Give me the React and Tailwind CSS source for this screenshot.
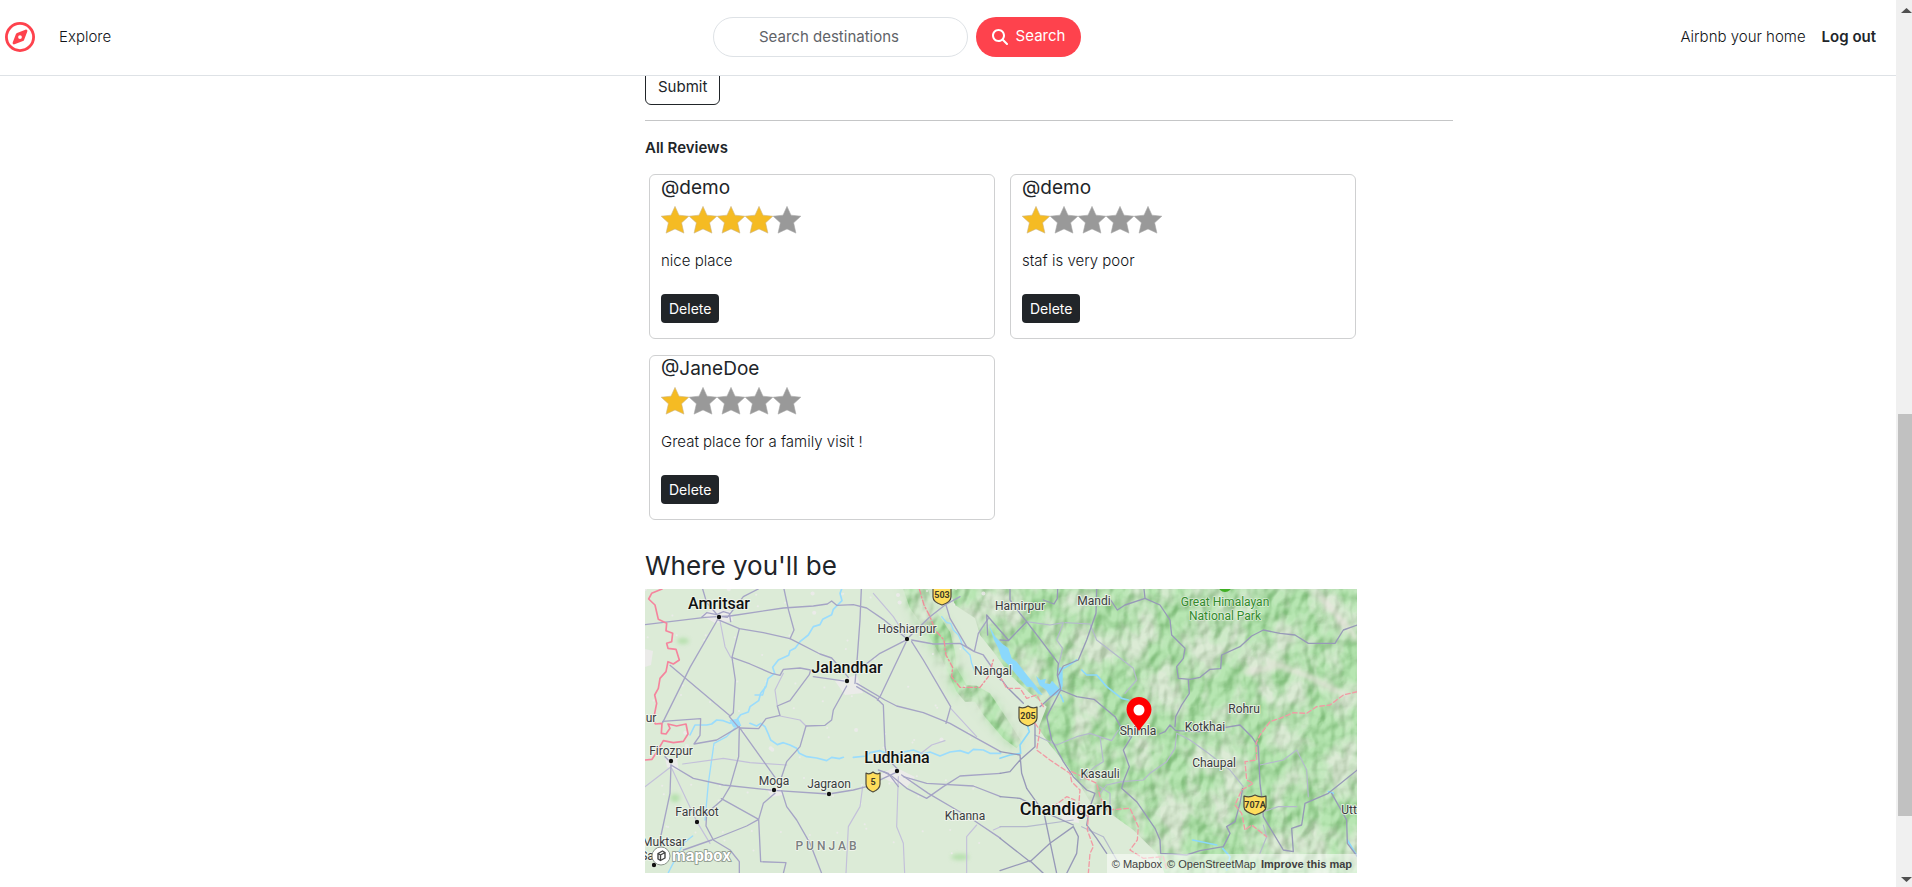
import React from "react";
import { FaRegCompass, FaMagnifyingGlass } from "react-icons/fa6";

const reviews = [
  { id: 1, user: "@demo", rating: 4, text: "nice place" },
  { id: 2, user: "@demo", rating: 1, text: "staf is very poor" },
  { id: 3, user: "@JaneDoe", rating: 1, text: "Great place for a family visit !" },
];

function Header() {
  return (
    <header className="relative z-10 flex h-[76px] shrink-0 items-center justify-between border-b border-[#dee2e6] bg-white pl-[5px] pr-5 pb-[2px]">
      <nav className="flex flex-[708] items-center gap-6">
        <a href="#home" aria-label="Home" className="text-[#fe424d]">
          <FaRegCompass className="size-[30px]" />
        </a>
        <a href="#explore" className="pt-[2px] font-light text-[#111418]">Explore</a>
      </nav>
      <form className="flex items-center gap-2" onSubmit={(e) => e.preventDefault()}>
        <input
          type="search"
          aria-label="Search destinations"
          placeholder="Search destinations"
          className="h-10 w-[255px] rounded-full border border-[#dee2e6] bg-white px-[45px] outline-none placeholder:text-[#5f6368]"
        />
        <button className="flex h-10 w-[105px] items-center justify-center gap-2 rounded-full bg-[#fe424d] text-white">
          <FaMagnifyingGlass className="size-4" />
          Search
        </button>
      </form>
      <nav className="flex flex-[795] items-center justify-end gap-4 pt-[2px]">
        <a href="#host" className="font-light text-[#111418]">Airbnb your home</a>
        <a href="#logout" className="font-semibold">Log out</a>
      </nav>
    </header>
  );
}

function Stars({ rating }) {
  return (
    <div className="flex" role="img" aria-label={`Rated ${rating} out of 5 stars`}>
      {[1, 2, 3, 4, 5].map((n) => (
        <svg key={n} viewBox="0 0 28 28" className="size-7">
          <path
            d="M14 .4 18 9.2 27.8 10.200 20.600 16.8 22.900 27.100 14 22.900 5.100 27.100 7.400 16.8.2 10.200 10 9.200Z"
            fill={n <= rating ? "#f5bb23" : "#999999"}
            stroke={n <= rating ? "#cdb681" : "#a8a8a8"}
            strokeWidth=".6"
            strokeLinejoin="round"
          />
        </svg>
      ))}
    </div>
  );
}

function ReviewCard({ review }) {
  return (
    <article className="flex h-[165px] flex-col items-start rounded-md border border-[#cfd0d1] px-[11px]">
      <h3 className="text-[19px] leading-[26px]">{review.user}</h3>
      <div className="mt-[5px]">
        <Stars rating={review.rating} />
      </div>
      <p className="mt-[15px] font-light leading-6 text-[#111418]">{review.text}</p>
      <button className="mt-[21px] h-[29px] rounded bg-[#212529] px-2 text-sm text-white">Delete</button>
    </article>
  );
}

const westRoads = [
  "M15 134 195 112 232 110 270 108 430 84 520 78 562 72 575 63 590 76 640 74 680 84 730 118 795 172",
  "M188 27 200 68 235 108 262 112 310 50 355 27M185 112 200 98 230 104 250 95 268 100 272 125",
  "M232 120 150 262 68 428M232 118 298 146 370 158 450 176 540 222 575 234 625 292",
  "M432 27 446 92 462 150 450 176",
  "M664 27 660 120 652 230 645 310M298 146 276 232 286 300 280 398 268 410 296 442",
  "M276 232 330 252 395 280 420 286 430 268 480 264 512 270 508 284 450 362 412 378 420 406 378 416 356 446 300 444 M268 406 90 256",
  "M68 424 182 416 180 466 162 492 230 480 298 440",
  "M298 442 296 530 270 620 246 660 200 700 198 738 220 780 270 810 298 845 298 880",
  "M298 442 405 592M425 590 440 545 480 500 498 438 555 436 575 420 580 390 620 318",
  "M800 182 720 350 712 360M650 310 735 360 770 378 850 398 930 430 1010 475 1082 515",
  "M795 182 720 220 655 270M815 185 850 240 932 380 918 430",
  "M800 178 870 110 915 75 960 50M815 180 880 192 960 190 1003 215 1015 160 1045 115M918 75 930 115 980 200 1003 215 1030 225 1082 300",
  "M712 358 730 375 735 500 742 535 775 570M520 290 620 304M650 320 710 355",
  "M93 555 160 595 250 615 401 631 566 642 640 630 680 620 730 595 775 574",
  "M93 555 90 640 60 780M93 548 75 530M425 632 440 680 470 720 510 790 545 880",
  "M405 640 370 670 356 718 362 845 438 848 430 880M244 656 356 718 320 738 215 780 130 810",
  "M785 585 865 640 950 690 1000 720 1082 775M730 575 755 588 800 625 860 655 910 620 960 588 1082 580",
  "M790 590 860 610 1000 618 1082 650M715 570 745 580 775 620",
];
const westMinor = [
  "M240 122 255 200 272 232M430 280 405 330 412 378M420 408 480 420 498 438M128 552 250 535 330 548 440 555",
  "M95 565 170 724 210 790M93 560 15 620M775 590 770 740 790 790 794 880M668 620 660 680 625 740 618 880",
  "M932 385 1010 470M830 530 875 495 915 482M1010 735 980 770 980 880M1082 740 1060 750M700 40 760 110 795 165",
];
const eastRoads = [
  "M0 180 25 182 80 125 60 100 30 60 30 27M80 125 130 190 175 250 172 285 182 325 120 380M80 625 130 695 220 735",
  "M173 27 172 55 162 72 130 60M290 27 288 100 260 180 235 240 190 258 175 285M182 330 230 350 282 358 345 410 365 445 390 470",
  "M432 27 435 55 480 75 510 120 515 165 555 205 550 235 530 260 535 295 570 298 600 292 630 268 662 266 665 225 720 200 755 168 790 150 840 160 885 165 925 190 1005 190 1030 150 1072 135",
  "M565 300 568 340 545 375 527 410 525 440M395 470 370 510 388 560 372 600 365 625 410 665 465 745 480 780 482 820 560 825 600 812 670 800 690 760 680 740 705 725 720 670 728 625",
  "M525 450 510 435 495 455 478 462M528 452 600 455 720 435 755 470 775 500 780 610 785 650 790 710 850 810 880 815 875 745 905 735 915 670 985 640 1072 570M995 640 1040 720 1042 790 1072 830",
  "M182 330 140 410 155 480 190 545 220 590 260 630 285 640 270 680 260 735 290 775 320 820",
  "M0 515 60 525 65 580 80 625M105 430 105 500 60 540 30 575 0 580M0 650 60 655 130 690 170 880M0 775 90 845 150 790 220 740 235 770 230 820 200 880M0 872 90 842 130 880",
  "M435 55 375 75 352 90 332 60M-37 165 -40 105 25 180M-20 265 20 320 70 370",
];
const eastMinor = [
  "M80 125 150 135 190 128 170 180 188 205 176 255M195 128 270 132 290 180 400 265 410 300 375 340",
  "M105 465 170 495 230 470 270 460 335 482 355 450M300 470 310 545 285 560 240 600",
  "M365 605 430 600 450 580 500 545 525 505 530 460 570 480 625 520 690 570 730 620",
  "M780 555 850 540 890 510 920 570 925 650M790 695 835 680 890 680M790 735 800 770 780 820",
  "M0 740 80 740 220 720M245 740 310 770 350 840M300 640 320 615 365 605M300 620 330 640 330 700",
];
const westRiver =
  "M605 27 600 40 606 62 580 88 575 104 548 118 540 134 520 140 505 165 480 185 466 204 450 212 446 226 415 240 398 262 404 280 384 296 378 320 362 340 356 362 330 380 325 396 302 404 290 420 270 430 250 422 230 420 215 432 200 435 165 435 150 465M330 430 350 438 362 430 375 440 385 462 392 480 412 494 430 488 450 495 470 505 478 520 500 530 530 534 560 542 575 532 598 536 610 532M640 532 680 528 690 518 720 512 760 528 790 516 820 510 850 522 870 516 900 528 930 516 960 512 985 520 1000 508 1030 510 1050 520 1082 520";

const towns = [
  { n: "Amritsar", x: 74, y: 20, d: [74, 28], big: true },
  { n: "Jalandhar", x: 202, y: 84, d: [202, 92], big: true },
  { n: "Ludhiana", x: 252, y: 174, d: [252, 182], big: true },
  { n: "Chandigarh", x: 421, y: 226, big: true, size: 18 },
  { n: "Hoshiarpur", x: 262, y: 44, d: [262, 50] },
  { n: "Firozpur", x: 26, y: 166, d: [26, 172] },
  { n: "Moga", x: 129, y: 196, d: [129, 201] },
  { n: "Jagraon", x: 184, y: 199, d: [184, 205] },
  { n: "Faridkot", x: 52, y: 227, d: [52, 233] },
  { n: "Khanna", x: 320, y: 231 },
  { n: "Nangal", x: 348, y: 86 },
  { n: "Hamirpur", x: 375, y: 21 },
  { n: "Mandi", x: 449, y: 16 },
  { n: "Shimla", x: 493, y: 146 },
  { n: "Kotkhai", x: 560, y: 142 },
  { n: "Rohru", x: 599, y: 124 },
  { n: "Chaupal", x: 569, y: 178 },
  { n: "Kasauli", x: 455, y: 189 },
  { n: "Muktsar", x: 19, y: 257 },
  { n: "Utt", x: 704, y: 225 },
  { n: "ur", x: 6, y: 133 },
  { n: "Sa", x: 2, y: 271, d: [9, 276] },
];

function Shield({ x, y, w, children }) {
  const h = w / 2;
  return (
    <g transform={`translate(${x} ${y})`}>
      <path
        d={`M${-h} -8 Q${-h / 2} -6 0 -9 Q${h / 2} -6 ${h} -8 V3 Q${h} 8 0 11 Q${-h} 8 ${-h} 3Z`}
        fill="#fedd5c"
        stroke="#4d4a3c"
        strokeWidth="1.2"
        strokeLinejoin="round"
      />
      <text y="4" textAnchor="middle" fontSize="9" fontWeight="700" fill="#3f3b28">{children}</text>
    </g>
  );
}

function MapDrawing() {
  return (
    <svg
      viewBox="0 0 712 284"
      preserveAspectRatio="xMidYMid slice"
      className="block h-full w-full font-['Roboto',sans-serif]"
      role="img"
      aria-label="Map of Shimla and surroundings"
    >
      <defs>
        <filter id="relief" x="0" y="0" width="100%" height="100%" colorInterpolationFilters="sRGB">
          <feTurbulence type="fractalNoise" baseFrequency=".075 .055" numOctaves="2" seed="8" result="n" />
          <feColorMatrix in="n" values="0 0 0 0 0 0 0 0 0 0 0 0 0 0 0 1 0 0 0 0" />
          <feDiffuseLighting surfaceScale="7" diffuseConstant="1.08" lightingColor="#ffffff">
            <feDistantLight azimuth="225" elevation="45" />
          </feDiffuseLighting>
        </filter>
        <filter id="patches" x="0" y="0" width="100%" height="100%" colorInterpolationFilters="sRGB">
          <feTurbulence type="fractalNoise" baseFrequency=".035 .025" numOctaves="4" seed="21" />
          <feColorMatrix values="0 0 0 0 .82 0 0 0 0 .9 0 0 0 0 .79 3 0 0 0 -1.15" />
        </filter>
        <filter id="soft"><feGaussianBlur stdDeviation="2" /></filter>
        <filter id="softWide"><feGaussianBlur stdDeviation="6" /></filter>
        <mask id="hills">
          <g fill="#fff" filter="url(#softWide)">
            <path d="M258 -6H280L294 26 306 46 310 70 322 94 312 108 298 78 280 46 266 20Z" />
            <path d="M330 100 342 106 362 130 376 152 370 158 352 140 334 118Z" />
          </g>
          <g transform="translate(215 -4) scale(.33333)" fill="#fff">
            <path
              filter="url(#soft)"
              d="M125 0H198L230 80 270 140 285 200 290 250 320 300 350 302 390 325 440 400 485 470 470 490 430 460 370 390 345 350 315 350 290 320 265 265 240 210 200 140 150 70Z"
            />
            <path
              filter="url(#soft)"
              d="M262 0 285 60 345 100 360 150 400 200 450 270 510 325 560 365 535 430 570 480 620 540 655 590 690 650 750 685 820 735 890 805 920 880H1520V0Z"
            />
          </g>
        </mask>
      </defs>
      <rect width="712" height="284" fill="#dcebd7" />
      <g mask="url(#hills)">
        <rect width="712" height="284" fill="#a2df9c" />
        <rect width="712" height="284" filter="url(#patches)" />
        <rect width="712" height="284" filter="url(#relief)" opacity=".26" style={{ mixBlendMode: "soft-light" }} />
        <rect width="712" height="284" filter="url(#relief)" opacity=".12" />
      </g>
      <g filter="url(#soft)">
        <path d="M622 72 660 86 704 108M676 8 712 50M600 84 640 76" fill="none" stroke="#eee4e3" strokeWidth="6" opacity=".6" />
      </g>
      <g fill="#8bd47f" opacity=".5" filter="url(#soft)">
        <ellipse cx="30" cy="209" rx="5" ry="4" />
        <ellipse cx="315" cy="268" rx="9" ry="3" />
        <ellipse cx="38" cy="52" rx="6" ry="3" />
      </g>
      <g fill="#efebee" opacity=".8">
        {Array.from({ length: 110 }, (_, i) => (
          <circle key={i} cx={(i * 89.7) % 340} cy={(i * 47.3 + ((i * i) % 31)) % 284} r={i % 9 === 0 ? 2 : 1} />
        ))}
        <path d="M56 26 68 20 86 22 88 32 70 34ZM190 92 212 86 218 104 200 106ZM234 186 250 178 270 188 262 198 244 192ZM412 214 432 216 434 234 418 232ZM20 168 32 170 34 182 22 178ZM0 60 8 62 6 76 0 78ZM122 200 136 198 138 206 126 208Z" />
      </g>

      <g transform="translate(-5 -9) scale(.33333)" fill="none" strokeLinejoin="round" strokeLinecap="round">
        <path d={westRiver} stroke="#9adcfd" strokeWidth="5" />
        <path d="M345 345 368 345 375 320M298 430 260 470 222 490 205 610 195 720M905 110 920 128 932 130 940 150 955 165 962 180 970 205 990 225 995 250 1005 275M85 878 130 790 158 768" stroke="#9adcfd" strokeWidth="4" />
        <path d="M268 420 295 416 304 438 280 442Z" fill="#9adcfd" />
        {westMinor.map((d) => <path key={d} d={d} stroke="#c3c0da" strokeWidth="3.500" />)}
        {westRoads.map((d) => <path key={d} d={d} stroke="#a5a4c5" strokeWidth="4" />)}
        <path d="M66 27 35 40 26 57 45 75 55 118 80 130 78 152 98 160 95 185 80 190 84 205 108 208 118 240 100 252 84 245 78 275 60 295 55 325 44 345 50 370 40 420 46 432 66 430 64 460 78 462 90 445 84 432 110 438 138 432 144 462 130 484 100 488 70 482 48 520 36 538 15 540" stroke="#f5849d" strokeWidth="5" />
        <path d="M838 27 852 75 870 110 885 150 912 180 918 225 938 262 935 290 960 322 1020 322 1045 290 1060 240" stroke="#f08d99" strokeWidth="4" strokeDasharray="16 7 5 7" />
      </g>
      <g transform="translate(355 -9) scale(.33333)" fill="none" strokeLinejoin="round" strokeLinecap="round">
        <path d="M-34 135 -14 170 5 190 25 205 35 235 50 245 85 290 108 318 128 345 115 342 96 322 80 320 50 285 25 255 5 235 -5 205 -18 180ZM108 288 122 300 138 296 134 310 150 312 156 302 182 330 170 346 150 348 138 330 118 315Z" fill="#8bd8fb" />
        <path d="M230 240 200 260 180 270 184 330M245 270 260 285 290 285 320 320 365 355 385 360M80 430 88 455 60 495 62 520 30 525 0 535M578 780 650 795M668 805 690 830 680 870M985 635 1000 640M1042 780 1072 830M182 345 190 365" stroke="#8bd8fb" strokeWidth="5" />
        <path d="M182 268V318" stroke="#8bd8fb" strokeWidth="12" />
        {eastMinor.map((d) => <path key={d} d={d} stroke="#b4b9cc" strokeWidth="3.500" />)}
        {eastRoads.map((d) => <path key={d} d={d} stroke="#9799b8" strokeWidth="4" />)}
        <path d="M0 290 20 325 60 325 80 355 110 345 130 380M105 430 120 450 110 510 150 540 210 580 215 605 240 630 235 690 265 710 262 750 280 800 270 820 265 880M215 575 290 610 300 650 320 690 390 685 415 740 412 780 390 810 430 835 490 830 500 870M160 680 200 650 225 660M1072 335 1030 345 990 375 950 380 920 400 880 398 840 415 810 425 780 465 768 490 770 540 735 545 740 600 760 610 725 630 705 675 725 700 735 750 755 735 800 770 820" stroke="#f29aa4" strokeWidth="4" strokeDasharray="14 8" />
      </g>

      <Shield x={297} y={5} w={18}>503</Shield>
      <Shield x={228} y={192} w={14}>5</Shield>
      <Shield x={383} y={126} w={18}>205</Shield>
      <Shield x={610} y={215} w={22}>707A</Shield>
      <circle cx="580" cy="-4" r="7" fill="#3fb024" />

      <g textAnchor="middle" stroke="#f3f7f0" strokeLinejoin="round" paintOrder="stroke">
        {towns.map((t) => (
          <g key={t.n}>
            {t.d && <circle cx={t.d[0]} cy={t.d[1]} r="2.2" fill="#111" strokeWidth="1" />}
            <text
              x={t.x}
              y={t.y}
              fontSize={t.big ? t.size || 16 : 12}
              fontWeight={t.big ? 500 : 400}
              fill={t.big ? "#111" : "#3a3b40"}
              strokeWidth="2"
              strokeOpacity=".8"
            >
              {t.n}
            </text>
          </g>
        ))}
        <text x="181" y="261" fontSize="12" fontWeight="500" fill="#7b7f80" strokeWidth="1.5">P U N J A B</text>
        <g fill="#338a2c" fontSize="12" strokeWidth="1.5" strokeOpacity=".6">
          <text x="580" y="17">Great Himalayan</text>
          <text x="580" y="31">National Park</text>
        </g>
      </g>

      <g>
        <path d="M494 142C489 134 481.500 128 481.500 120.500A12.500 12.500 0 0 1 506.500 120.500C506.500 128 499 134 494 142Z" fill="#f00" />
        <circle cx="494" cy="121" r="5.500" fill="#fff" />
      </g>

      <g>
        <circle cx="16" cy="267" r="9" fill="#fff" stroke="#8b948b" strokeWidth="1" />
        <path d="M13 264.500 17.500 262 20 263.500V269L15.500 271.500 13 270ZM15.500 266V271M13 264.500 15.500 266 20 263.500" fill="none" stroke="#444" strokeWidth="1.400" strokeLinejoin="round" />
        <text x="27" y="272" fontSize="15" fontWeight="700" fill="#fff" stroke="#899489" strokeWidth="1.600" paintOrder="stroke" className="font-['Inter',sans-serif]">mapbox</text>
      </g>
    </svg>
  );
}

function LocationMap() {
  return (
    <div className="relative h-[284px] w-full max-w-[712px] overflow-hidden">
      <MapDrawing />
      <div className="absolute bottom-0 right-0 flex h-[19px] items-center gap-[5px] bg-white/50 px-[5px] font-['Liberation_Sans',sans-serif] text-[11px] leading-5 text-[#404040]">
        <a href="#mapbox">© Mapbox</a>
        <a href="#osm">© OpenStreetMap</a>
        <a href="#improve" className="font-bold">Improve this map</a>
      </div>
    </div>
  );
}

function ScrollRail() {
  return (
    <div aria-hidden="true" className="flex w-4 shrink-0 flex-col items-end bg-[#f0f0f0]">
      <svg viewBox="0 0 14 17" className="h-[17px] w-[14px] shrink-0"><path d="M3 13 8.500 8 14 13Z" fill="#505050" /></svg>
      <div className="flex-[397]" />
      <div className="w-[14px] flex-[402] bg-[#c1c1c1]" />
      <div className="flex-[54]" />
      <svg viewBox="0 0 14 17" className="h-[17px] w-[14px] shrink-0"><path d="M3 7 8.500 12 14 7Z" fill="#505050" /></svg>
    </div>
  );
}

export default function App() {
  return (
    <div className="flex h-screen overflow-hidden bg-white font-['Inter',sans-serif] text-[15px] text-[#212529]">
      <div className="flex min-w-0 flex-1 flex-col">
        <Header />
        <main className="grid min-h-0 flex-1 grid-cols-[645fr_808fr_443fr] overflow-hidden">
          <section className="col-start-2 -mt-2 min-w-0">
            <button className="block h-[37px] rounded-md border border-[#212529] px-3 pt-[2px]">Submit</button>
            <hr className="mt-[15px] border-[#c5c6c7]" />
            <h2 className="mt-[15px] font-semibold leading-6">All Reviews</h2>
            <div className="ml-1 mt-[14px] grid max-w-[707px] grid-cols-2 gap-x-[15px] gap-y-4">
              {reviews.map((r) => <ReviewCard key={r.id} review={r} />)}
            </div>
            <h2 className="mb-[5px] mt-7 text-[26px] leading-9">Where you&apos;ll be</h2>
            <LocationMap />
          </section>
        </main>
      </div>
      <ScrollRail />
    </div>
  );
}
